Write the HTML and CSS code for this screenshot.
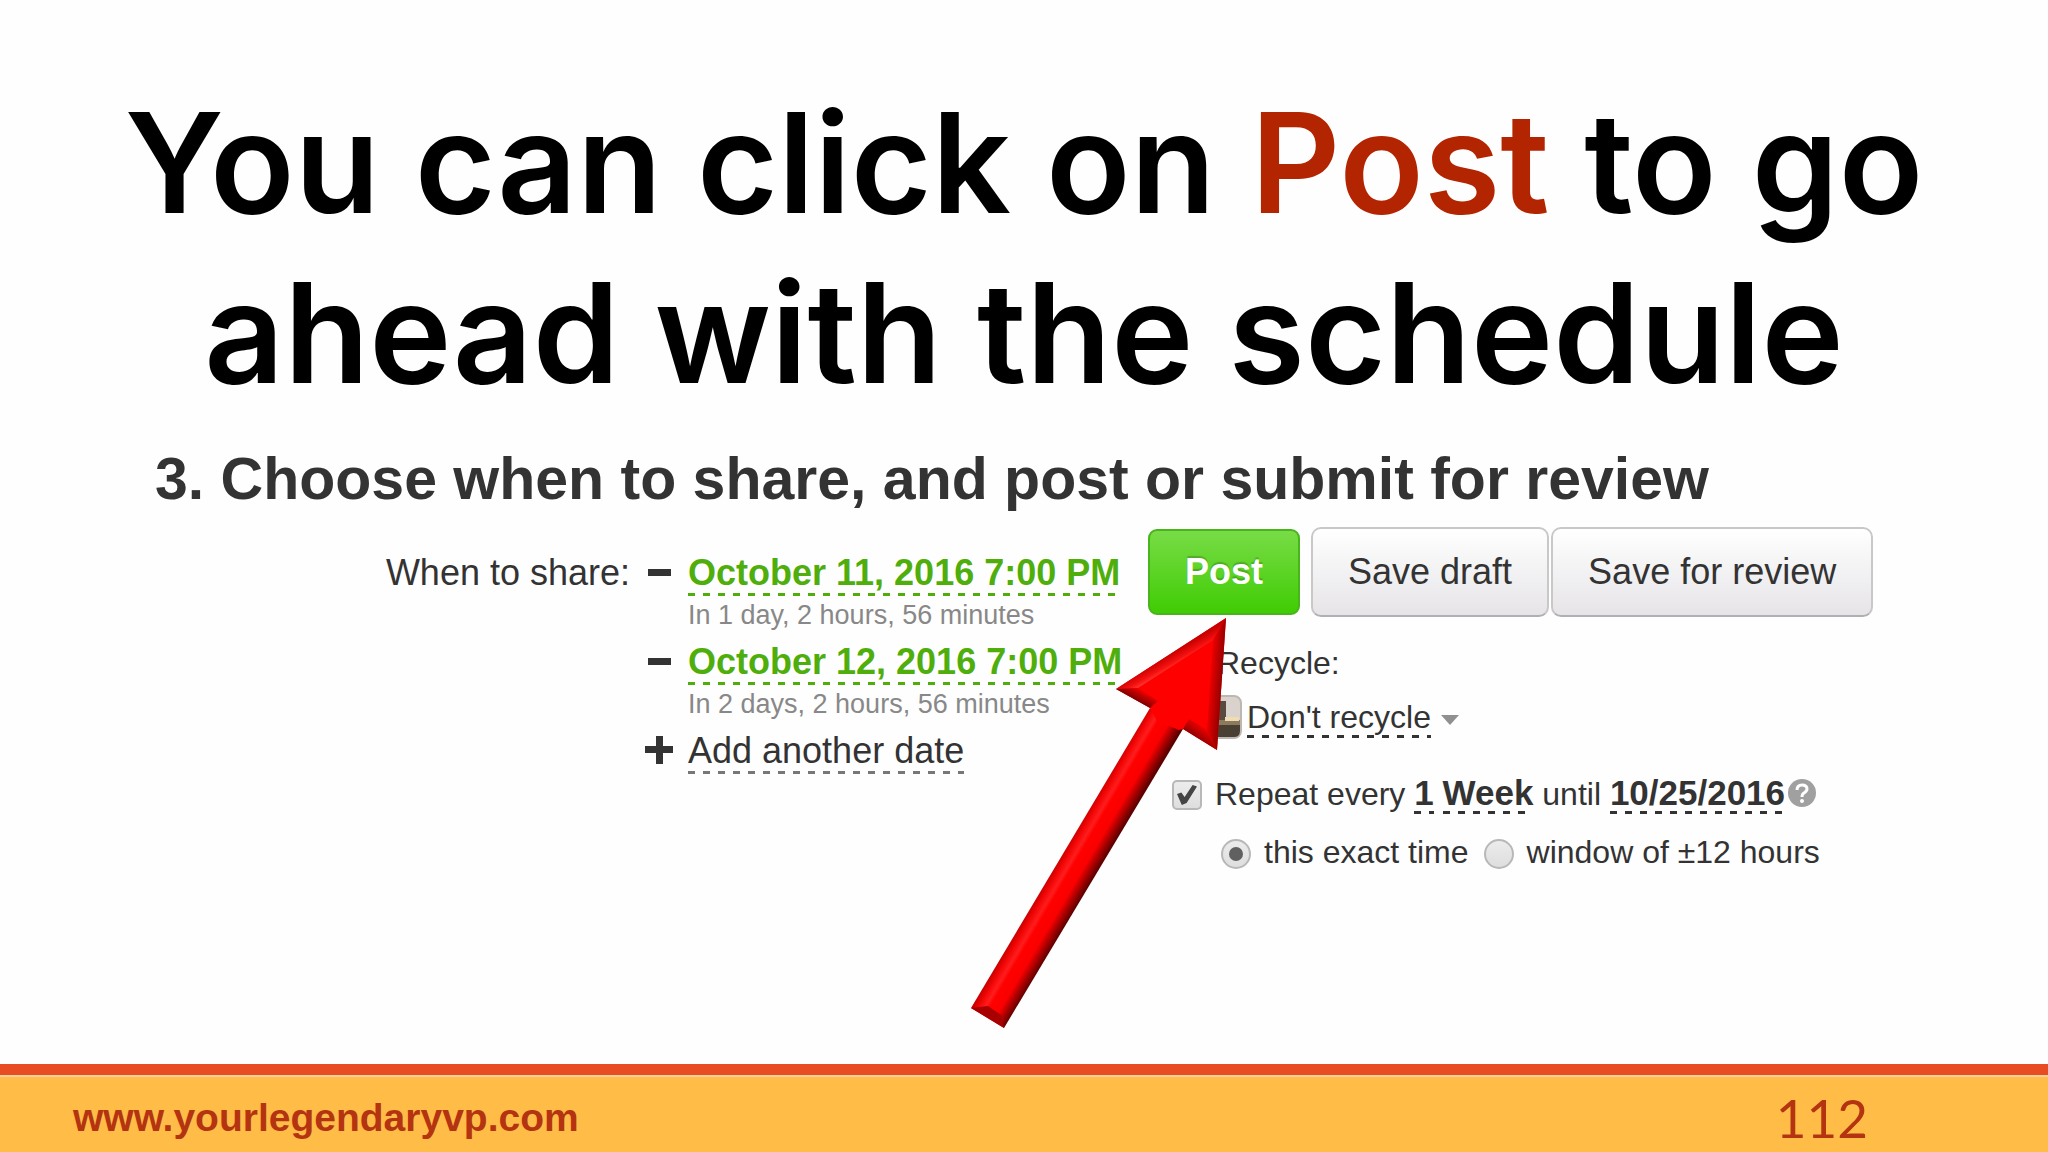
FILE: index.html
```
<!doctype html>
<html lang="en">

<head>
  <title>Schedule a post</title>
  <meta charset="utf-8" />
  <link rel="stylesheet" href="styles.css">
</head>

<body>
  <main>
    <h1>You can click on <em>Post</em> to go<br />ahead with the schedule</h1>

    <h2>3. Choose when to share, and post or submit for review</h2>

    <form class="schedule">
      <div class="when">When to share:</div>

      <ul class="dates">
        <li>
          <svg class="sign" viewBox="0 0 28 28"><path d="M3 11h23v7H3z" /></svg>
          <div>
            <a class="date" href="#">October 11, 2016 7:00 PM</a>
            <p>In 1 day, 2 hours, 56 minutes</p>
          </div>
        </li>
        <li>
          <svg class="sign" viewBox="0 0 28 28"><path d="M3 11h23v7H3z" /></svg>
          <div>
            <a class="date" href="#">October 12, 2016 7:00 PM</a>
            <p>In 2 days, 2 hours, 56 minutes</p>
          </div>
        </li>
        <li>
          <svg class="sign" viewBox="0 0 28 28"><path d="M11 0h7v10h10v7H18v11h-7V17H0v-7h11z" /></svg>
          <a class="add" href="#">Add another date</a>
        </li>
      </ul>

      <div class="actions">
        <div class="buttons">
          <button class="post" type="button">Post</button>
          <button type="button">Save draft</button>
          <button type="button">Save for review</button>
        </div>

        <div class="options">
          <label class="recycle" for="recycle">Recycle:</label>
          <div class="queue">
            <svg class="avatar" viewBox="0 0 44 44">
              <rect x="1" y="1" width="42" height="42" rx="7" fill="#d9d2cd" stroke="#bdb7b2" stroke-width="2" />
              <path d="M2 25h40v11q0 6-6 6H8q-6 0-6-6z" fill="#4a3f33" />
              <path d="M2 25h40v5H2z" fill="#8d7a5e" />
              <path d="M4 6h24v19H4z" fill="#5a4a3e" />
              <path d="M27 22h14v4H27z" fill="#efdcb0" />
            </svg>
            <select id="recycle">
              <option>Don't recycle</option>
            </select>
            <svg class="caret" viewBox="0 0 18 10"><path d="M0 0h18L9 10z" /></svg>
          </div>
          <div class="repeat">
            <input id="repeat" type="checkbox" checked />
            <div>
              <label for="repeat">Repeat every</label>
              <a href="#">1</a> <a href="#">Week</a> until <a href="#">10/25/2016</a>
            </div>
            <svg class="help" viewBox="0 0 28 28">
              <circle cx="14" cy="14" r="14" fill="#a0a0a0" />
              <path d="M9 11q0-5 5-5t5 4q0 2-3 4-2 1-2 4" fill="none" stroke="#fff" stroke-width="3" />
              <circle cx="14" cy="22" r="2" fill="#fff" />
            </svg>
          </div>
          <div class="times">
            <input id="exact" type="radio" name="time" checked />
            <label for="exact">this exact time</label>
            <input id="window" type="radio" name="time" />
            <label for="window">window of ±12 hours</label>
          </div>
        </div>

        <!-- red arrow pointing up at the Post button -->
        <svg class="arrow" viewBox="0 0 260 412">
          <defs>
            <linearGradient id="shaft" gradientUnits="userSpaceOnUse" x1="1" y1="390" x2="35" y2="410">
              <stop offset="0" stop-color="#c40000" />
              <stop offset=".15" stop-color="#f20505" />
              <stop offset=".3" stop-color="#ff1d1d" />
              <stop offset=".4" stop-color="#ff0000" />
              <stop offset=".66" stop-color="#fa0000" />
              <stop offset=".85" stop-color="#a00000" />
              <stop offset="1" stop-color="#5c0000" />
            </linearGradient>
            <linearGradient id="top" gradientUnits="userSpaceOnUse" x1="200" y1="36" x2="207" y2="48">
              <stop offset="0" stop-color="#c80000" />
              <stop offset=".6" stop-color="#f51010" />
              <stop offset="1" stop-color="#ff3a30" />
            </linearGradient>
            <linearGradient id="side" gradientUnits="userSpaceOnUse" x1="239" y1="70" x2="252" y2="71">
              <stop offset="0" stop-color="#f00000" />
              <stop offset="1" stop-color="#900000" />
            </linearGradient>
            <linearGradient id="under" gradientUnits="userSpaceOnUse" x1="168" y1="70" x2="162" y2="81">
              <stop offset="0" stop-color="#f00000" />
              <stop offset="1" stop-color="#760000" />
            </linearGradient>
            <linearGradient id="barb" gradientUnits="userSpaceOnUse" x1="235" y1="110" x2="227" y2="121">
              <stop offset="0" stop-color="#f00000" />
              <stop offset="1" stop-color="#900000" />
            </linearGradient>
          </defs>
          <path d="M180 90 1 390l33 20L213 111z" fill="url(#shaft)" />
          <path d="M1 390l33 20-3-13-13-9z" fill="#a80000" />
          <path d="M256 0 146 71l34 19 7 13 22 9 4-1 34 21z" fill="#ff0000" />
          <path d="M256 0 146 71l22-1 75-48z" fill="url(#top)" />
          <path d="M256 0l-13 22-6 90 10 20z" fill="url(#side)" />
          <path d="M146 71l34 19 8-7-20-13z" fill="url(#under)" />
          <path d="M213 111l34 21-10-20-18-11z" fill="url(#barb)" />
        </svg>
      </div>
    </form>
  </main>

  <footer>
    <a href="#">www.yourlegendaryvp.com</a>
    <span>112</span>
  </footer>
</body>

</html>
```
FILE: styles.css
```
* {
  box-sizing: border-box;
}

body {
  margin: 0;
  min-height: 100vh;
  display: flex;
  flex-direction: column;
  background-color: #fefefe;
  color: #333;
  font-family: "Liberation Sans", Arial, sans-serif;
  font-size: 32px;
}

main {
  flex: 1;
  padding-top: 78px;
}

h1 {
  margin: 0;
  color: #000;
  font-family: Inter, sans-serif;
  font-size: 139px;
  font-weight: 600;
  line-height: 170px;
  text-align: center;
}

h1 em {
  color: #b32400;
  font-style: normal;
}

h2 {
  margin: 27px 0 14px;
  padding-left: 155px;
  font-size: 59px;
  line-height: 68px;
}

a {
  text-decoration: none;
}

.schedule {
  display: grid;
  grid-template-columns: 630fr 518fr 900fr;
  align-items: start;
}

.when {
  padding-top: 23px;
  font-size: 36px;
  line-height: 46px;
  text-align: right;
}

.dates {
  display: flex;
  flex-direction: column;
  gap: 8px;
  margin: 0;
  padding: 23px 0 0 15px;
  list-style: none;
}

.dates li {
  display: flex;
  gap: 15px;
}

.dates p {
  margin: 3px 0 0;
  color: #888;
  font-size: 27px;
  line-height: 32px;
}

.sign {
  width: 28px;
  height: 28px;
  margin-top: 8px;
  fill: #333;
}

.date,
.add,
.repeat a,
select {
  display: inline-block;
  background: repeating-linear-gradient(90deg, currentColor 0 7px, transparent 7px 15px) left bottom / 100% 3px no-repeat;
}

.date,
.add {
  font-size: 36px;
  line-height: 46px;
}

.date {
  display: block;
  color: #4fae0c;
  font-weight: bold;
}

.add {
  background-image: repeating-linear-gradient(90deg, #777 0 7px, transparent 7px 15px);
  color: #333;
}

.actions {
  position: relative;
}

.buttons {
  display: flex;
  align-items: center;
  gap: 2px;
}

button {
  height: 90px;
  padding: 0 35px;
  border: 2px solid #c8c8c8;
  border-bottom-color: #b0b0b4;
  border-radius: 10px;
  background: linear-gradient(#fff, #e6e4e7);
  color: #333;
  font-family: inherit;
  font-size: 36px;
}

.buttons .post {
  height: 86px;
  margin-right: 9px;
  border: 2px solid #48b51c;
  border-radius: 9px;
  background: linear-gradient(#78dc46, #40cc04);
  color: #fff;
  font-weight: bold;
  text-shadow: 0 -2px 1px rgba(0, 0, 0, 0.2);
}

.options {
  padding: 26px 0 0 24px;
}

.recycle {
  display: block;
  padding-left: 45px;
  line-height: 40px;
}

.queue,
.repeat,
.times {
  display: flex;
  align-items: center;
  height: 42px;
  line-height: 42px;
}

.queue {
  margin-top: 13px;
  padding-left: 26px;
}

.avatar {
  width: 44px;
  height: 44px;
}

select {
  height: 42px;
  margin: 0 10px 0 5px;
  padding: 0;
  border: 0;
  border-radius: 0;
  appearance: none;
  color: inherit;
  font-family: inherit;
  font-size: 32px;
}

.caret {
  width: 18px;
  height: 10px;
  margin-top: 6px;
  fill: #909090;
}

.repeat {
  margin-top: 34px;
}

.repeat a {
  color: #333;
  font-size: 35px;
  font-weight: bold;
}

.help {
  width: 28px;
  height: 28px;
  margin-left: 3px;
}

.times {
  margin-top: 17px;
  padding-left: 49px;
}

input {
  flex: none;
  width: 30px;
  height: 30px;
  margin: 4px 13px 0 0;
  border: 2px solid #b8b8b8;
  background: linear-gradient(#ececec, #dedede);
  appearance: none;
}

input[type="checkbox"] {
  border-radius: 5px;
}

input[type="checkbox"]:checked::before {
  content: "";
  display: block;
  width: 20px;
  height: 20px;
  margin: 3px;
  background-color: #444;
  clip-path: polygon(0 45%, 22% 38%, 38% 60%, 78% 0, 100% 8%, 48% 90%, 24% 100%);
}

input[type="radio"] {
  border-radius: 50%;
}

input[type="radio"]:checked::before {
  content: "";
  display: block;
  width: 14px;
  height: 14px;
  margin: 6px;
  border-radius: 50%;
  background-color: #606060;
}

.times label + input {
  margin-left: 15px;
}

.arrow {
  position: absolute;
  left: -178px;
  top: 91px;
  width: 260px;
  height: 412px;
  pointer-events: none;
}

footer {
  display: flex;
  justify-content: space-between;
  align-items: center;
  height: 88px;
  padding: 8px 180px 0 73px;
  border-top: 11px solid #e84c22;
  background-color: #ffbd47;
  box-shadow: inset 0 2px #ffcf9c;
  color: #b43412;
}

footer a {
  color: inherit;
  font-size: 39px;
  font-weight: bold;
}

footer span {
  font-family: Lato, sans-serif;
  font-size: 53px;
}
```
